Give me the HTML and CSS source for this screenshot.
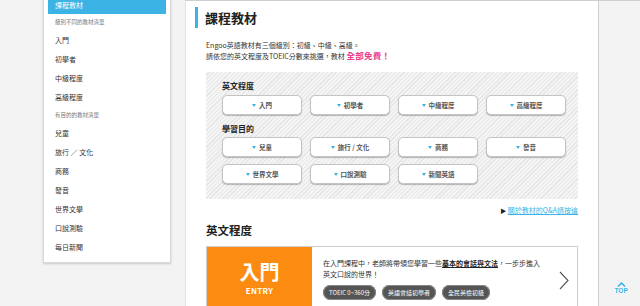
FILE: index.html
```html
<!DOCTYPE html>
<html lang="zh-Hant">
<head>
<meta charset="utf-8">
<title>課程教材</title>
<link rel="stylesheet" href="styles.css">
</head>
<body>
<div class="page">
  <aside class="side">
    <div class="side-active">課程教材</div>
    <div class="side-head">級別不同的教材清單</div>
    <div class="side-item">入門</div>
    <div class="side-item">初學者</div>
    <div class="side-item">中級程度</div>
    <div class="side-item">高級程度</div>
    <div class="side-head">有目的的教材清單</div>
    <div class="side-item">兒童</div>
    <div class="side-item">旅行 ／ 文化</div>
    <div class="side-item">商務</div>
    <div class="side-item">發音</div>
    <div class="side-item">世界文學</div>
    <div class="side-item">口說測驗</div>
    <div class="side-item">每日新聞</div>
  </aside>
  <div class="stage">
    <main class="main">
      <h1 class="title">課程教材</h1>
      <p class="desc">Engoo英語教材有三個級別：初級、中級、高級。<br>請依您的英文程度及TOEIC分數來挑選，教材 <strong class="free">全部免費！</strong></p>
      <section class="filter">
        <div class="filter-label">英文程度</div>
        <div class="btn-grid">
          <a class="btn">入門</a>
          <a class="btn">初學者</a>
          <a class="btn">中級程度</a>
          <a class="btn">高級程度</a>
        </div>
        <div class="filter-label label-2">學習目的</div>
        <div class="btn-grid">
          <a class="btn">兒童</a>
          <a class="btn">旅行 / 文化</a>
          <a class="btn">商務</a>
          <a class="btn">發音</a>
          <a class="btn">世界文學</a>
          <a class="btn">口說測驗</a>
          <a class="btn">新聞英語</a>
        </div>
      </section>
      <div class="qa"><span class="qa-arrow">▶</span> <a class="qa-link">關於教材的Q&amp;A請按這</a></div>
      <h2 class="sub">英文程度</h2>
      <div class="card">
        <div class="card-badge">
          <div class="badge-main">入門</div>
          <div class="badge-en">ENTRY</div>
        </div>
        <div class="card-body">
          <p class="card-text">在入門課程中，老師將帶領您學習一些<b class="em">基本的會話與文法</b>，一步步進入<br>英文口說的世界！</p>
          <div class="tags">
            <span class="tag">TOEIC 0~360分</span>
            <span class="tag">英語會話初學者</span>
            <span class="tag">全民英檢初級</span>
          </div>
        </div>
        <svg class="chev" width="10" height="19" viewBox="0 0 10 19"><polyline points="1,1 9,9.5 1,18" fill="none" stroke="#555" stroke-width="1.1"/></svg>
      </div>
    </main>
    <div class="gutter"></div>
  </div>
</div>
<a class="top"><svg width="9" height="5" viewBox="0 0 9 5"><polyline points="1,4.5 4.5,1 8,4.5" fill="none" stroke="#3bb4e5" stroke-width="1.6"/></svg><span>TOP</span></a>
</body>
</html>
```
FILE: styles.css
```css
* { box-sizing: border-box; }
html, body { margin: 0; padding: 0; }
body {
  width: 640px;
  height: 306px;
  overflow: hidden;
  background: #f3f3f3;
  font-family: "Noto Sans CJK TC", "Noto Sans", sans-serif;
  color: #333;
}
.page {
  display: flex;
  align-items: flex-start;
  height: 306px;
}
.side {
  margin-left: 43px;
  width: 128px;
  background: #fff;
  border: 1px solid #d9d9d9;
  border-top: none;
  box-shadow: 0 1px 2px rgba(0,0,0,0.18);
  padding: 0 4px 5px;
}
.side-active {
  height: 14px;
  background: #3bb4e5;
  color: #fff;
  font-size: 7px;
  line-height: 10px;
  padding-left: 7px;
}
.side-head {
  font-size: 5.5px;
  color: #777;
  line-height: 17px;
  padding-left: 7px;
}
.side-item {
  font-size: 7px;
  line-height: 19px;
  padding-left: 7px;
  color: #333;
}
.stage {
  margin-left: 14px;
  flex: 1;
  display: flex;
  height: 306px;
  border-top: 1px solid #cfcfcf;
}
.main {
  width: 414px;
  height: 305px;
  overflow: hidden;
  background: #fff;
  border-left: 1px solid #e2e2e2;
  border-right: 1px solid #cfcfcf;
  padding: 6px 20px 0 20px;
}
.gutter { flex: 1; }
.title {
  margin: 0 0 0 -11px;
  border-left: 3px solid #3bb4e5;
  padding-left: 7px;
  font-size: 13px;
  line-height: 21px;
  font-weight: bold;
  color: #222;
}
.desc {
  margin: 12px 0 0;
  font-size: 7px;
  line-height: 10px;
  color: #333;
}
.free {
  color: #ea3a8c;
  font-size: 8.5px;
  font-weight: bold;
  letter-spacing: 0.3px;
}
.filter {
  margin-top: 11px;
  padding: 9px 12px 15px 16px;
  background: repeating-linear-gradient(-45deg, #f4f4f4 0, #f4f4f4 2px, #e6e6e6 2px, #e6e6e6 3px);
}
.filter-label {
  font-size: 8px;
  line-height: 10px;
  font-weight: bold;
  color: #222;
  margin-bottom: 4px;
}
.label-2 { margin-top: 9px; margin-bottom: 3px; }
.btn-grid {
  display: grid;
  grid-template-columns: repeat(4, 80px);
  column-gap: 8px;
  row-gap: 7px;
}
.btn {
  display: flex;
  align-items: center;
  justify-content: center;
  height: 20px;
  background: #fff;
  border: 1px solid #c4c4c4;
  border-radius: 5px;
  box-shadow: 0 1px 1px rgba(0,0,0,0.25);
  font-size: 6.5px;
  font-weight: bold;
  color: #555;
}
.btn::before {
  content: "";
  width: 0;
  height: 0;
  border-left: 2.8px solid transparent;
  border-right: 2.8px solid transparent;
  border-top: 3.5px solid #3bb4e5;
  margin-right: 3px;
}
.qa {
  margin-top: 6px;
  text-align: right;
  font-size: 7px;
  line-height: 10px;
}
.qa-arrow { color: #222; font-size: 6px; }
.qa-link {
  color: #3bb4e5;
  text-decoration: underline;
}
.sub {
  margin: 7px 0 0;
  font-size: 11.5px;
  line-height: 14px;
  font-weight: bold;
  color: #222;
}
.card {
  margin-top: 9px;
  display: flex;
  align-items: flex-start;
  border: 1px solid #cdcdcd;
  border-bottom: none;
  height: 63px;
}
.card-badge {
  width: 105px;
  height: 62px;
  background: #fb8c11;
  color: #fff;
  text-align: center;
  padding-top: 14px;
}
.badge-main {
  font-size: 20px;
  line-height: 22px;
  font-weight: bold;
}
.badge-en {
  margin-top: 3px;
  font-size: 8px;
  line-height: 10px;
  font-weight: bold;
  letter-spacing: 0.3px;
}
.card-body {
  flex: 1;
  padding: 11px 0 0 11px;
}
.card-text {
  margin: 0;
  font-size: 7px;
  line-height: 11px;
  color: #333;
}
.em {
  text-decoration: underline;
  color: #222;
}
.tags {
  margin-top: 5px;
  display: flex;
  gap: 6px;
}
.tag {
  height: 15px;
  line-height: 15px;
  padding: 0 6px;
  background: #555;
  color: #fff;
  border-radius: 8px;
  font-size: 6px;
  box-shadow: 0 0 0 1px #888 inset;
}
.chev {
  margin: 24px 8px 0 0;
}
.top {
  position: fixed;
  right: 12px;
  bottom: 12px;
  display: flex;
  flex-direction: column;
  align-items: center;
  color: #3bb4e5;
  font-family: "Liberation Sans", sans-serif;
  font-weight: bold;
  font-size: 6.5px;
  line-height: 7px;
}
```
